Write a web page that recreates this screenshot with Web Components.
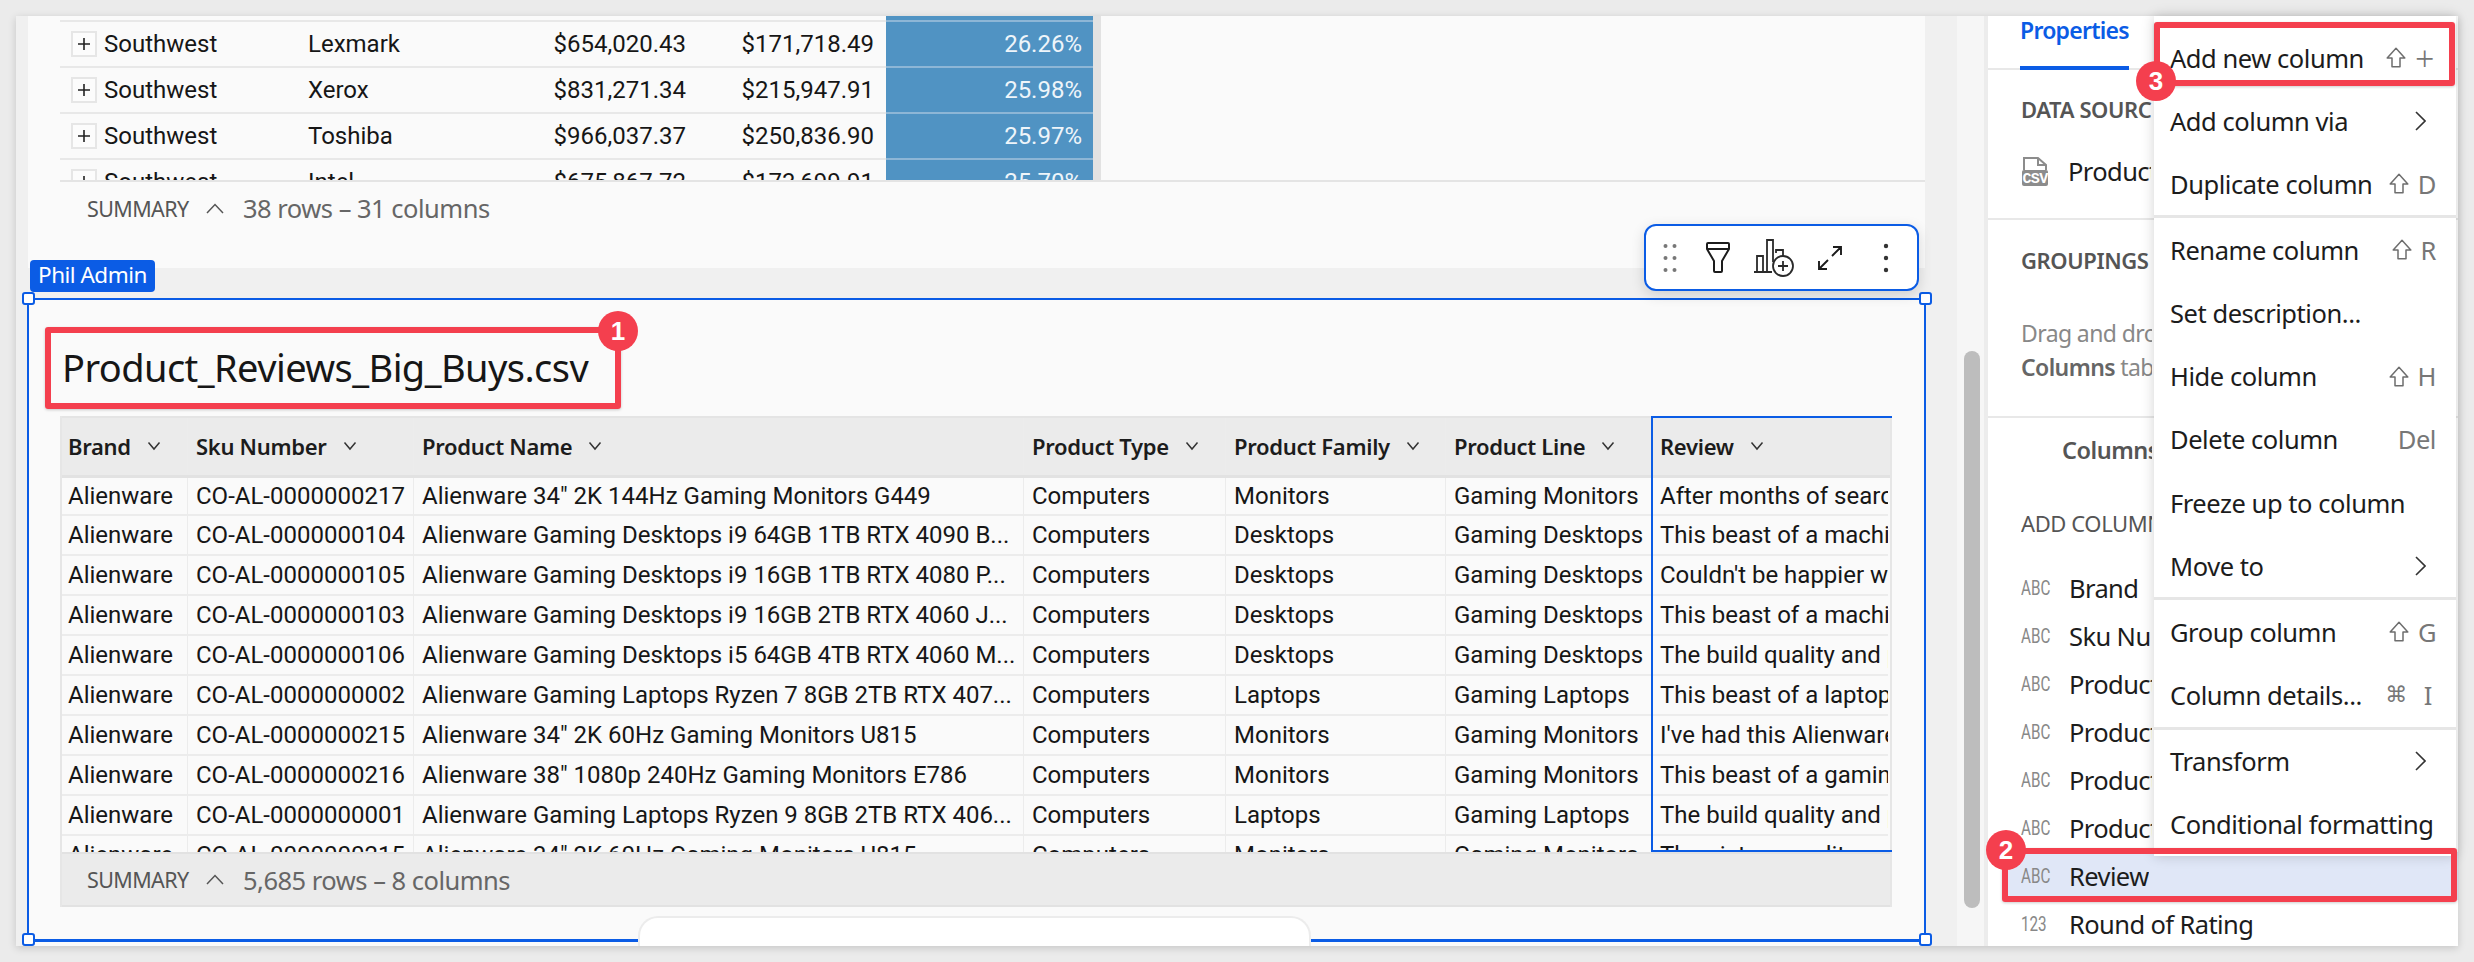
<!DOCTYPE html>
<html>
<head>
<meta charset="utf-8">
<title>Product Reviews</title>
<style>
  html, body { margin: 0; height: 100%; }
  body {
    padding: 16px 16px 0;
    box-sizing: border-box;
    background: #ebebeb;
    overflow: hidden;
    --ui: "Noto Sans", sans-serif;
    --cell: Roboto, sans-serif;
    --blue: #0b5ce5;
    --line: #e8e8e8;
    font-family: var(--ui);
    color: #161616;
  }
</style>
</head>
<body>

<sheet-window>
  <work-canvas>
    <plain-element>
      <region-grid></region-grid>
      <summary-bar>38 rows – 31 columns</summary-bar>
    </plain-element>
    <selected-element title-text="Product_Reviews_Big_Buys.csv" owner="Phil Admin">
      <review-grid></review-grid>
    </selected-element>
  </work-canvas>
  <scroll-rail></scroll-rail>
  <props-panel></props-panel>
  <column-menu>
    <menu-group>
      <menu-item shift="+">Add new column</menu-item>
      <menu-item more>Add column via</menu-item>
      <menu-item shift="D">Duplicate column</menu-item>
    </menu-group>
    <menu-group>
      <menu-item shift="R">Rename column</menu-item>
      <menu-item>Set description...</menu-item>
      <menu-item shift="H">Hide column</menu-item>
      <menu-item key="Del">Delete column</menu-item>
      <menu-item>Freeze up to column</menu-item>
      <menu-item more>Move to</menu-item>
    </menu-group>
    <menu-group>
      <menu-item shift="G">Group column</menu-item>
      <menu-item cmd="I">Column details...</menu-item>
    </menu-group>
    <menu-group last>
      <menu-item more>Transform</menu-item>
      <menu-item>Conditional formatting</menu-item>
    </menu-group>
  </column-menu>
  <callout-box box="29 311 576 82" badge="602 315">1</callout-box>
  <callout-box box="1986 832 455 54" badge="1990 834">2</callout-box>
  <callout-box box="2138 6 301 64" badge="2140 65">3</callout-box>
</sheet-window>

<script>
const chevronDown = `<svg width="14" height="10" viewBox="0 0 14 10" fill="none" stroke="#333" stroke-width="1.5"><path d="M1.5 1.5 7 8l5.5-6.5"/></svg>`;
const chevronUp = `<svg width="18" height="11" viewBox="0 0 18 11" fill="none" stroke="#555" stroke-width="1.5"><path d="M1 10 9 1.5 17 10"/></svg>`;
const chevronRight = `<svg width="11" height="20" viewBox="0 0 11 20" fill="none" stroke="#333" stroke-width="1.6"><path d="M1 1l9 9-9 9"/></svg>`;
const shiftArrow = `<svg width="20" height="21" viewBox="0 0 20 21" fill="none" stroke="#6e6e6e" stroke-width="1.5" stroke-linejoin="round"><path d="M10 1.2 18.8 11H14v8.8H6V11H1.2z"/></svg>`;

class SheetWindow extends HTMLElement {
  constructor() {
    super();
    this.attachShadow({ mode: "open" }).innerHTML = `
      <style>
        :host {
          display: flex;
          position: relative;
          width: 2442px;
          height: 930px;
          background: #f0f0f0;
          box-shadow: 0 2px 8px rgba(0, 0, 0, 0.16);
        }
      </style>
      <slot></slot>`;
  }
}

class WorkCanvas extends HTMLElement {
  constructor() {
    super();
    this.attachShadow({ mode: "open" }).innerHTML = `
      <style>
        :host {
          display: flex;
          flex-direction: column;
          flex: none;
          width: 1941px;
          box-sizing: border-box;
          padding: 0 32px 0 12px;
          gap: 32px;
        }
      </style>
      <slot></slot>`;
  }
}

class PlainElement extends HTMLElement {
  constructor() {
    super();
    this.attachShadow({ mode: "open" }).innerHTML = `
      <style>
        :host {
          display: block;
          height: 252px;
          flex: none;
          padding-left: 32px;
          box-sizing: border-box;
          background: #fafafa;
          overflow: hidden;
        }
        ::slotted(summary-bar) { margin-left: -5px; height: 52px; }
      </style>
      <slot></slot>`;
  }
}

class RegionGrid extends HTMLElement {
  constructor() {
    super();
    const rows = [
      ["Southwest", "Lexmark", "$654,020.43", "$171,718.49", "26.26%"],
      ["Southwest", "Xerox", "$831,271.34", "$215,947.91", "25.98%"],
      ["Southwest", "Toshiba", "$966,037.37", "$250,836.90", "25.97%"],
      ["Southwest", "Intel", "$675,867.72", "$173,699.91", "25.70%"],
    ];
    const body = rows.map((r) => `
      <div class="row">
        <div class="c first"><span class="plus"><svg width="14" height="14" viewBox="0 0 14 14" stroke="#222" stroke-width="1.6"><path d="M7 1v12M1 7h12"/></svg></span>${r[0]}</div>
        <div class="c second">${r[1]}</div>
        <div class="c num">${r[2]}</div>
        <div class="c num">${r[3]}</div>
        <div class="c heat">${r[4]}</div>
        <div class="strip"></div>
      </div>`).join("");
    this.attachShadow({ mode: "open" }).innerHTML = `
      <style>
        :host {
          display: block;
          height: 166px;
          box-sizing: border-box;
          overflow: hidden;
          border-bottom: 2px solid #e4e4e4;
          font: 24px var(--cell);
          color: #161616;
        }
        .row {
          display: grid;
          grid-template-columns: 240px 200px 194px 192px 207px 8px;
          height: 46px;
          width: max-content;
        }
        .head { height: 6px; }
        .c {
          display: flex;
          align-items: center;
          box-sizing: border-box;
          border-bottom: 2px solid var(--line);
          white-space: nowrap;
        }
        .first { padding-left: 11px; gap: 7px; }
        .second { padding-left: 8px; }
        .plus {
          display: flex;
          align-items: center;
          justify-content: center;
          width: 26px;
          height: 26px;
          box-sizing: border-box;
          border: 2px solid #e6e6e6;
          background: #fcfcfc;
        }
        .num { justify-content: flex-end; padding-right: 8px; }
        .num + .num { padding-right: 12px; }
        .heat {
          justify-content: flex-end;
          padding-right: 11px;
          background: #5093c3;
          color: #eef5fa;
          border-bottom-color: #8db6d6;
        }
        .strip { background: #e2e2e2; }
      </style>
      <div class="row head">
        <div class="c"></div><div class="c"></div><div class="c"></div><div class="c"></div><div class="c heat"></div><div class="strip"></div>
      </div>
      ${body}`;
  }
}

class SummaryBar extends HTMLElement {
  constructor() {
    super();
    this.attachShadow({ mode: "open" }).innerHTML = `
      <style>
        :host {
          display: flex;
          align-items: center;
          box-sizing: border-box;
          padding-left: 32px;
          font-family: var(--ui);
          color: #666;
        }
        .label { font-size: 21.5px; letter-spacing: -0.6px; color: #555; width: 101px; white-space: nowrap; }
        svg { margin: 0 19px 0 18px; }
        .count { font-size: 25.5px; letter-spacing: -0.5px; white-space: nowrap; }
      </style>
      <span class="label">SUMMARY</span>${chevronUp}<span class="count"><slot></slot></span>`;
  }
}

class SelectedElement extends HTMLElement {
  constructor() {
    super();
    this.attachShadow({ mode: "open" }).innerHTML = `
      <style>
        :host {
          display: block;
          position: relative;
          flex: 1;
          z-index: 2;
          padding: 40px 33px 0 32px;
          box-sizing: border-box;
          background: #fafafa;
        }
        h1 {
          margin: 0 0 22px 2px;
          font: 400 38px/54px var(--ui);
          letter-spacing: -0.57px;
          color: #161616;
          white-space: nowrap;
        }
        .frame {
          position: absolute;
          left: -1px;
          top: -2px;
          width: 1899px;
          height: 644px;
          box-sizing: border-box;
          border: 2px solid var(--blue);
          border-width: 2px 2px 3px 2px;
          pointer-events: none;
        }
        .frame i {
          position: absolute;
          width: 13px;
          height: 13px;
          box-sizing: border-box;
          border: 2px solid var(--blue);
          border-radius: 3px;
          background: #fff;
        }
        .tl { left: -7px; top: -8px; }
        .tr { right: -8px; top: -8px; }
        .bl { left: -7px; bottom: -7px; }
        .br { right: -8px; bottom: -7px; }
        .owner {
          position: absolute;
          left: 2px;
          top: -40px;
          height: 32px;
          width: 125px;
          box-sizing: border-box;
          border-radius: 4px;
          background: var(--blue);
          color: #fff;
          font: 22.5px/30px var(--ui);
          letter-spacing: -0.5px;
          text-align: center;
          white-space: nowrap;
        }
        .drawer {
          position: absolute;
          left: 610px;
          top: 616px;
          width: 673px;
          height: 30px;
          box-sizing: border-box;
          border: 2px solid #ececec;
          border-bottom: none;
          border-radius: 20px 20px 0 0;
          background: #fff;
        }
      </style>
      <h1></h1>
      <slot></slot>
      <div class="frame"><i class="tl"></i><i class="tr"></i><i class="bl"></i><i class="br"></i></div>
      <div class="owner"></div>
      <element-toolbar></element-toolbar>
      <div class="drawer"></div>`;
    this.shadowRoot.querySelector("h1").textContent = this.getAttribute("title-text");
    this.shadowRoot.querySelector(".owner").textContent = this.getAttribute("owner");
  }
}

class ElementToolbar extends HTMLElement {
  constructor() {
    super();
    this.attachShadow({ mode: "open" }).innerHTML = `
      <style>
        :host {
          display: flex;
          align-items: center;
          position: absolute;
          left: 1616px;
          top: -76px;
          width: 275px;
          height: 67px;
          box-sizing: border-box;
          padding-left: 17px;
          border: 2px solid var(--blue);
          border-radius: 12px;
          background: #fff;
          box-shadow: 0 4px 14px rgba(0, 0, 0, 0.14);
        }
        svg { flex: none; display: block; }
      </style>
      <svg width="14" height="28" viewBox="0 0 14 28" fill="#777"><circle cx="2.5" cy="2" r="2"/><circle cx="11.5" cy="2" r="2"/><circle cx="2.5" cy="14" r="2"/><circle cx="11.5" cy="14" r="2"/><circle cx="2.5" cy="26" r="2"/><circle cx="11.5" cy="26" r="2"/></svg>
      <svg style="margin-left:27px" width="28" height="34" viewBox="0 0 28 34" fill="none" stroke="#1c1c1c" stroke-width="2" stroke-linejoin="round"><path d="M3 3a1 1 0 0 1 1-1h20a1 1 0 0 1 1 1v5L18 20v10a1 1 0 0 1-1 1h-6a1 1 0 0 1-1-1V20L3 8zM3 8h22"/></svg>
      <svg style="margin-left:22px" width="40" height="38" viewBox="0 0 40 38" fill="none" stroke="#2a2a2a" stroke-width="1.8"><path d="M0 33h18M3 33V17h6v16M13 33V1h6v22M22 14v-3h7v6"/><circle cx="29" cy="27" r="10"/><path d="M29 22v10M24 27h10"/></svg>
      <svg style="margin-left:24px" width="24" height="24" viewBox="0 0 24 24" fill="none" stroke="#1c1c1c" stroke-width="1.9"><path d="M14 10l9-9M15 1h8v8M10 14l-9 9M1 15v8h8"/></svg>
      <svg style="margin-left:38px" width="12" height="30" viewBox="0 0 12 30" fill="#333"><circle cx="6" cy="3" r="2.2"/><circle cx="6" cy="15" r="2.2"/><circle cx="6" cy="27" r="2.2"/></svg>`;
  }
}

class ReviewGrid extends HTMLElement {
  constructor() {
    super();
    const heads = ["Brand", "Sku Number", "Product Name", "Product Type", "Product Family", "Product Line", "Review"];
    const rows = [
      ["0000000217", `Alienware 34" 2K 144Hz Gaming Monitors G449`, "Monitors", "Gaming Monitors", "After months of searching"],
      ["0000000104", "Alienware Gaming Desktops i9 64GB 1TB RTX 4090 B...", "Desktops", "Gaming Desktops", "This beast of a machine"],
      ["0000000105", "Alienware Gaming Desktops i9 16GB 1TB RTX 4080 P...", "Desktops", "Gaming Desktops", "Couldn't be happier with"],
      ["0000000103", "Alienware Gaming Desktops i9 16GB 2TB RTX 4060 J...", "Desktops", "Gaming Desktops", "This beast of a machine"],
      ["0000000106", "Alienware Gaming Desktops i5 64GB 4TB RTX 4060 M...", "Desktops", "Gaming Desktops", "The build quality and performance"],
      ["0000000002", "Alienware Gaming Laptops Ryzen 7 8GB 2TB RTX 407...", "Laptops", "Gaming Laptops", "This beast of a laptop"],
      ["0000000215", `Alienware 34" 2K 60Hz Gaming Monitors U815`, "Monitors", "Gaming Monitors", "I've had this Alienware"],
      ["0000000216", `Alienware 38" 1080p 240Hz Gaming Monitors E786`, "Monitors", "Gaming Monitors", "This beast of a gaming"],
      ["0000000001", "Alienware Gaming Laptops Ryzen 9 8GB 2TB RTX 406...", "Laptops", "Gaming Laptops", "The build quality and performance"],
      ["0000000215", `Alienware 34" 2K 60Hz Gaming Monitors U815`, "Monitors", "Gaming Monitors", "The picture quality"],
    ];
    const cell = (t) => `<div class="c">${t}</div>`;
    const headRow = heads.map((h) => `<div class="c">${h}${chevronDown}</div>`).join("");
    const bodyRows = rows.map((r) => `<div class="row">${[
      "Alienware", "CO-AL-" + r[0], r[1], "Computers", r[2], r[3], r[4],
    ].map(cell).join("")}</div>`).join("");
    this.attachShadow({ mode: "open" }).innerHTML = `
      <style>
        :host {
          display: block;
          position: relative;
          width: 1832px;
          box-sizing: border-box;
          border-left: 2px solid #e6e6e6;
          border-right: 2px solid #e6e6e6;
        }
        .row, .top {
          display: grid;
          grid-template-columns: 125px 226px 610px 202px 220px 206px 237px;
        }
        .top {
          height: 62px;
          box-sizing: border-box;
          padding-bottom: 2px;
          background: #ebebeb;
          border-top: 2px solid #e4e4e4;
          border-bottom: 3px solid #e2e2e2;
          font: 600 22px var(--ui);
          letter-spacing: -0.3px;
          color: #1c1c1c;
        }
        .top .c { gap: 16px; border-bottom: none; }
        .top svg { flex: none; }
        .body {
          height: 374px;
          overflow: hidden;
          font: 24px var(--cell);
          color: #161616;
          background: #fafafa;
        }
        .row { height: 40px; }
        .row:first-child { height: 38px; }
        .row:first-child .c { padding-bottom: 1px; }
        .c {
          display: flex;
          align-items: center;
          box-sizing: border-box;
          padding-left: 8px;
          border-left: 1px solid #ececec;
          border-bottom: 2px solid #ececec;
          white-space: nowrap;
          overflow: hidden;
        }
        .c:first-child { border-left: none; padding-left: 6px; }
        .picked {
          position: absolute;
          left: 1589px;
          top: 0;
          width: 241px;
          height: 436px;
          box-sizing: border-box;
          border: 2px solid var(--blue);
          border-right: none;
          pointer-events: none;
        }
        summary-bar { height: 55px; padding-left: 25px; background: #ebebeb; border-top: 2px solid #e2e2e2; border-bottom: 2px solid #e2e2e2; }
      </style>
      <div class="top">${headRow}</div>
      <div class="body">${bodyRows}</div>
      <summary-bar>5,685 rows – 8 columns</summary-bar>
      <div class="picked"></div>`;
  }
}

class ScrollRail extends HTMLElement {
  constructor() {
    super();
    this.attachShadow({ mode: "open" }).innerHTML = `
      <style>
        :host {
          display: block;
          flex: none;
          width: 31px;
          box-sizing: border-box;
          padding: 335px 0 0 7px;
          background: #f6f6f6;
          border-right: 4px solid #ececec;
        }
        div { width: 16px; height: 557px; border-radius: 8px; background: #bdbdbd; }
      </style>
      <div></div>`;
  }
}

class PropsPanel extends HTMLElement {
  constructor() {
    super();
    const names = ["Brand", "Sku Number", "Product Name", "Product Type", "Product Family", "Product Line"];
    const row = (type, name, extra = "") => `
      <div class="col ${extra}"><span class="type"><b>${type}</b></span><span class="name">${name}</span></div>`;
    this.attachShadow({ mode: "open" }).innerHTML = `
      <style>
        :host {
          display: block;
          flex: none;
          width: 470px;
          background: #fff;
          overflow: hidden;
          font-family: var(--ui);
          color: #1c1c1c;
        }
        .tabs { height: 54px; box-sizing: border-box; border-bottom: 2px solid var(--line); padding-left: 32px; }
        .tab {
          display: inline-block;
          height: 54px;
          box-sizing: border-box;
          border-bottom: 4px solid var(--blue);
          color: var(--blue);
          font: 600 23px/28px var(--ui);
          letter-spacing: -0.75px;
        }
        section { box-sizing: border-box; padding-left: 33px; border-bottom: 2px solid var(--line); white-space: nowrap; }
        h2 { margin: 0; width: 131px; overflow: hidden; font: 600 22px/28px var(--ui); letter-spacing: -0.4px; color: #555; }
        .source { height: 150px; padding-top: 25px; }
        .file { display: flex; align-items: center; height: 40px; margin-top: 28px; gap: 19px; font-size: 25.5px; letter-spacing: -0.6px; }
        .file span { width: 83px; overflow: hidden; }
        .groups { height: 198px; padding-top: 26px; }
        .hint { margin: 42px 0 0; width: 131px; overflow: hidden; font: 23px/34px var(--ui); letter-spacing: -0.6px; color: #888; }
        .hint b { font-weight: 600; color: #666; }
        .cols { padding-left: 33px; white-space: nowrap; }
        .switch { width: 131px; overflow: hidden; height: 64px; box-sizing: border-box; padding: 18px 0 0 41px; font: 600 23.5px/28px var(--ui); letter-spacing: -0.5px; color: #555; }
        .add { margin: 27px 0 27px; width: 131px; overflow: hidden; font: 22px/28px var(--ui); letter-spacing: -0.4px; color: #555; }
        .col { display: flex; align-items: center; height: 48px; margin-left: -17px; padding-left: 17px; font-size: 25.5px; letter-spacing: -0.6px; }
        .col .name { max-width: 83px; overflow: hidden; }
        .col.wide .name { max-width: none; }
        .col.on { background: #e0e7f7; }
        .type { flex: none; width: 48px; font: 20px var(--cell); letter-spacing: 0; color: #888; }
        .type b { display: inline-block; font-weight: 400; transform: scaleX(0.76); transform-origin: 0 50%; }
      </style>
      <div class="tabs"><span class="tab">Properties</span></div>
      <section class="source">
        <h2>DATA SOURCE</h2>
        <div class="file">
          <svg width="28" height="30" viewBox="0 0 28 30"><path d="M3 14V2h14l8 7v5M17 2v7h8" fill="none" stroke="#8c8c8c" stroke-width="2"/><rect x="1" y="14" width="26" height="16" rx="2" fill="#8c8c8c"/><text x="14" y="27" text-anchor="middle" font-family="Liberation Mono, monospace" font-weight="700" font-size="15" fill="#fff">CSV</text></svg>
          <span>Product_Reviews_Big_Buys</span>
        </div>
      </section>
      <section class="groups">
        <h2>GROUPINGS</h2>
        <p class="hint">Drag and drop<br><b>Columns</b> tab</p>
      </section>
      <div class="cols">
        <div class="switch">Columns</div>
        <div class="add">ADD COLUMN</div>
        ${names.map((n) => row("ABC", n)).join("")}
        ${row("ABC", "Review", "on wide")}
        ${row("123", "Round of Rating", "wide")}
      </div>`;
  }
}

class ColumnMenu extends HTMLElement {
  constructor() {
    super();
    this.attachShadow({ mode: "open" }).innerHTML = `
      <style>
        :host {
          display: block;
          position: absolute;
          left: 2138px;
          top: 0;
          width: 302px;
          padding-top: 10px;
          box-sizing: border-box;
          background: #fff;
          box-shadow: 0 0 12px rgba(0, 0, 0, 0.18);
          z-index: 3;
        }
      </style>
      <slot></slot>`;
  }
}

class MenuGroup extends HTMLElement {
  constructor() {
    super();
    this.attachShadow({ mode: "open" }).innerHTML = `
      <style>
        :host { display: block; border-bottom: 3px solid #e6e6e6; }
        :host([last]) { border-bottom: none; }
      </style>
      <slot></slot>`;
  }
}

class MenuItem extends HTMLElement {
  constructor() {
    super();
    let hint = "";
    if (this.hasAttribute("shift")) {
      const k = this.getAttribute("shift");
      hint = shiftArrow + `<span class="${k === "+" ? "plus" : ""}">${k}</span>`;
    } else if (this.hasAttribute("cmd")) {
      hint = `<span class="cmd">⌘</span><span class="i">${this.getAttribute("cmd")}</span>`;
    } else if (this.hasAttribute("key")) {
      hint = `<span>${this.getAttribute("key")}</span>`;
    } else if (this.hasAttribute("more")) {
      hint = `<span class="more">${chevronRight}</span>`;
    }
    this.attachShadow({ mode: "open" }).innerHTML = `
      <style>
        :host {
          display: flex;
          align-items: center;
          justify-content: space-between;
          height: 63.15px;
          box-sizing: border-box;
          padding: 0 20px 0 16px;
          font: 25.5px var(--ui);
          letter-spacing: -0.45px;
          color: #1c1c1c;
          white-space: nowrap;
        }
        .hint { display: flex; align-items: center; gap: 9px; color: #777; }
        .plus { font-size: 34px; font-weight: 300; line-height: 1; margin-right: 2px; }
        .cmd { font: 22px "DejaVu Sans", sans-serif; margin-right: 8px; }
        .i { margin-right: 4px; }
        .more { display: flex; margin-right: 10px; }
      </style>
      <slot></slot><span class="hint">${hint}</span>`;
  }
}

class CalloutBox extends HTMLElement {
  constructor() {
    super();
    const [x, y, w, h] = this.getAttribute("box").split(" ").map(Number);
    const [bx, by] = this.getAttribute("badge").split(" ").map(Number);
    this.attachShadow({ mode: "open" }).innerHTML = `
      <style>
        :host {
          display: block;
          position: absolute;
          left: ${x}px;
          top: ${y}px;
          width: ${w}px;
          height: ${h}px;
          box-sizing: border-box;
          border: 6px solid #f43f4e;
          border-radius: 3px;
          box-shadow: 0 1px 3px rgba(0, 0, 0, 0.2);
          z-index: 5;
          pointer-events: none;
        }
        .badge {
          position: absolute;
          left: ${bx - x - 6 - 20}px;
          top: ${by - y - 6 - 20}px;
          width: 40px;
          height: 40px;
          border-radius: 50%;
          background: #f43f4e;
          color: #fff;
          font: 700 26px/40px "Liberation Sans", sans-serif;
          text-align: center;
        }
      </style>
      <div class="badge"><slot></slot></div>`;
  }
}

customElements.define("sheet-window", SheetWindow);
customElements.define("work-canvas", WorkCanvas);
customElements.define("plain-element", PlainElement);
customElements.define("region-grid", RegionGrid);
customElements.define("summary-bar", SummaryBar);
customElements.define("selected-element", SelectedElement);
customElements.define("element-toolbar", ElementToolbar);
customElements.define("review-grid", ReviewGrid);
customElements.define("scroll-rail", ScrollRail);
customElements.define("props-panel", PropsPanel);
customElements.define("column-menu", ColumnMenu);
customElements.define("menu-group", MenuGroup);
customElements.define("menu-item", MenuItem);
customElements.define("callout-box", CalloutBox);
</script>
</body>
</html>
